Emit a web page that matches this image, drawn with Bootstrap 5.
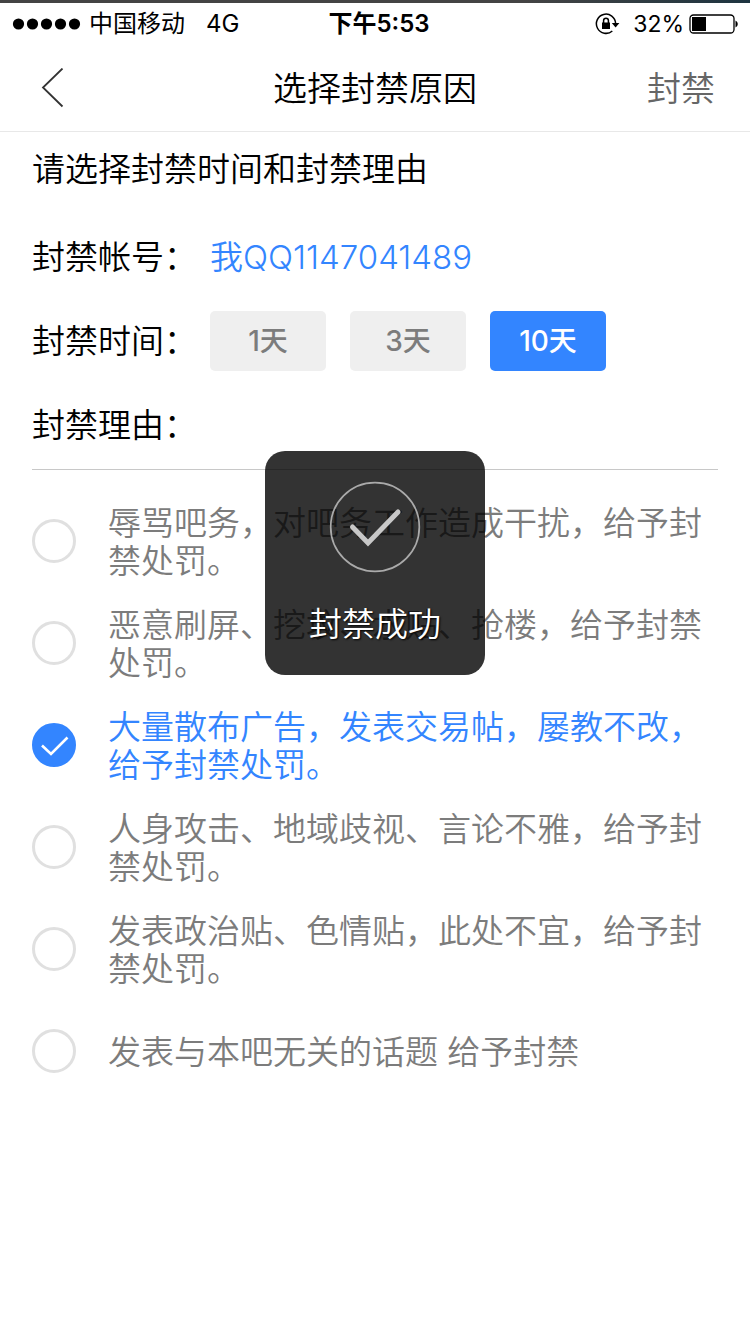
<!DOCTYPE html>
<html lang="zh-CN">
<head>
<meta charset="utf-8">
<meta name="viewport" content="width=device-width, initial-scale=1">
<title>选择封禁原因</title>
<link href="https://cdn.jsdelivr.net/npm/bootstrap@5.3.0/dist/css/bootstrap.min.css" rel="stylesheet">
<style>
  :root { --ink: #000; --muted: #7c7c7c; --brand: #3385ff; }
  body { font-family: Inter, "Noto Sans CJK SC", sans-serif; color: var(--ink); background: #fff; font-size: 33px; line-height: 38px; font-weight: 350; }
  .top-strip { height: 3px; background: linear-gradient(90deg, #444 0 70%, #1d3440); }
  .status-bar { height: 41px; padding: 0 12px; font-size: 24px; line-height: 40px; font-weight: 400; }
  .status-bar > div { flex: 1 1 0; }
  .carrier { gap: 21px; }
  .battery-text { font-size: 23px; }
  .title-bar { height: 88px; padding: 2px 35px 0; border-bottom: 1px solid #e8e8e8; }
  .title-bar > div { flex: 1 1 0; }
  .title-bar h1 { font-size: 34px; font-weight: 350; line-height: 40px; }
  .bar-btn { border: 0; background: none; padding: 0; color: #666; font-size: 34px; line-height: 40px; font-weight: 350; }
  .content { padding: 18px 32px; }
  .ban-form { padding-top: 27px; }
  .form-line { height: 84px; }
  .form-name { width: 178px; }
  .account { color: var(--brand); text-decoration: none; }
  .day-btn { width: 116px; height: 60px; padding: 0; border: 0; border-radius: 5px; background: #efefef; color: var(--muted); font-size: 28px; font-weight: 500; line-height: 60px; }
  .btn-check:checked + .day-btn { background: var(--brand); color: #fff; }
  .reasons { margin-top: 2px; border-top: 1px solid #c8c8c8; padding-top: 20px; }
  .reason { height: 102px; color: var(--muted); }
  .reason label { padding-top: 2px; }
  .reason .form-check-input { width: 44px; height: 44px; margin: 0 32px 0 0; border: 3px solid #e0e0e0; flex: none; }
  .reason .form-check-input:checked { border-color: var(--brand); background-color: var(--brand); background-size: 40px 40px; background-image: url("data:image/svg+xml,%3Csvg xmlns='http://www.w3.org/2000/svg' viewBox='0 0 40 40'%3E%3Cpath d='M8 20.5 17 29 33.500 12.500' fill='none' stroke='%23fff' stroke-width='2.600'/%3E%3C/svg%3E"); }
  .reason.picked { color: var(--brand); }
  .toast-box { top: 319px; width: 220px; padding: 30px 0 32px; border-radius: 20px; background: rgba(0,0,0,.8); color: #fff; text-shadow: 1px 1px 2px #000; }
</style>
</head>
<body>
<div class="top-strip"></div>
<div class="status-bar d-flex align-items-center">
  <div class="d-flex align-items-center">
    <svg class="me-2" width="69" height="14" viewBox="0 0 69 14" aria-hidden="true"><g fill="#000"><circle cx="6.500" cy="7" r="5.600"/><circle cx="20.500" cy="7" r="5.600"/><circle cx="34.500" cy="7" r="5.600"/><circle cx="48.500" cy="7" r="5.600"/><circle cx="62.500" cy="7" r="5.600"/></g></svg>
    <div class="carrier d-flex"><span>中国移动</span><span>4G</span></div>
  </div>
  <span class="fw-semibold ms-2">下午5:53</span>
  <div class="d-flex align-items-center justify-content-end">
    <svg class="me-2" width="26" height="22" viewBox="0 0 26 22" aria-hidden="true">
      <path d="M17.300 18A9.600 9.600 0 1 1 20.600 10.500" fill="none" stroke="#000" stroke-width="1.500"/>
      <path d="M16.800 10h7.600l-3.800 4.500z"/><path d="M7 9.500h8v6.500H7z"/><path d="M8.600 10V7.600a2.400 2.400 0 0 1 4.800 0V10" fill="none" stroke="#000" stroke-width="1.500"/>
    </svg>
    <span class="battery-text ms-1">32%</span>
    <svg class="ms-1" width="50" height="20" viewBox="0 0 50 20" aria-hidden="true"><rect x="2" y="1" width="44" height="18" rx="3.500" fill="none" stroke="#000" stroke-width="1.300"/><path d="M4 3h14v14H4zM47.500 6.500q2.300 1 2.300 3.500t-2.300 3.500z"/></svg>
  </div>
</div>
<header class="title-bar d-flex align-items-center">
  <div><button class="bar-btn d-block" type="button" aria-label="返回"><svg class="d-block" width="32" height="42" viewBox="0 0 32 42"><path d="M27.500 0.500 8 19.500 27.500 38.500" fill="none" stroke="#333" stroke-width="1.800"/></svg></button></div>
  <h1 class="m-0">选择封禁原因</h1>
  <div class="text-end"><button class="bar-btn" type="submit" form="ban">封禁</button></div>
</header>
<main class="content position-relative">
  <p class="m-0">请选择封禁时间和封禁理由</p>
  <form id="ban" class="ban-form">
    <div class="form-line d-flex align-items-center"><span class="form-name">封禁帐号：</span><a class="account" href="#">我QQ1147041489</a></div>
    <div class="form-line d-flex align-items-center" role="group" aria-label="封禁时间">
      <span class="form-name">封禁时间：</span>
      <div class="d-flex gap-4">
        <div><input class="btn-check" type="radio" name="days" id="d1"><label class="btn day-btn" for="d1">1天</label></div>
        <div><input class="btn-check" type="radio" name="days" id="d3"><label class="btn day-btn" for="d3">3天</label></div>
        <div><input class="btn-check" type="radio" name="days" id="d10" checked><label class="btn day-btn" for="d10">10天</label></div>
      </div>
    </div>
    <div class="form-line d-flex align-items-center"><span class="form-name">封禁理由：</span></div>
    <div class="reasons">
      <div class="reason d-flex align-items-center"><input class="form-check-input" type="radio" name="why" id="r1"><label for="r1">辱骂吧务，对吧务工作造成干扰，给予封禁处罚。</label></div>
      <div class="reason d-flex align-items-center"><input class="form-check-input" type="radio" name="why" id="r2"><label for="r2">恶意刷屏、挖坟、水贴、抢楼，给予封禁处罚。</label></div>
      <div class="reason picked d-flex align-items-center"><input class="form-check-input" type="radio" name="why" id="r3" checked><label for="r3">大量散布广告，发表交易帖，屡教不改，给予封禁处罚。</label></div>
      <div class="reason d-flex align-items-center"><input class="form-check-input" type="radio" name="why" id="r4"><label for="r4">人身攻击、地域歧视、言论不雅，给予封禁处罚。</label></div>
      <div class="reason d-flex align-items-center"><input class="form-check-input" type="radio" name="why" id="r5"><label for="r5">发表政治贴、色情贴，此处不宜，给予封禁处罚。</label></div>
      <div class="reason d-flex align-items-center"><input class="form-check-input" type="radio" name="why" id="r6"><label for="r6">发表与本吧无关的话题 给予封禁</label></div>
    </div>
  </form>
  <div class="toast-box position-absolute start-50 translate-middle-x text-center" role="status">
    <svg class="d-block mx-auto mb-4" width="92" height="92" viewBox="0 0 92 92" aria-hidden="true"><circle cx="46" cy="46" r="44.300" fill="none" stroke="#aaa" stroke-width="1.700"/><path d="M23.500 46 39 62 69 31" fill="none" stroke="#c8c8c8" stroke-width="5" stroke-linecap="round"/></svg>
    <div class="pt-2">封禁成功</div>
  </div>
</main>
<script src="https://cdn.jsdelivr.net/npm/bootstrap@5.3.0/dist/js/bootstrap.bundle.min.js"></script>
</body>
</html>
